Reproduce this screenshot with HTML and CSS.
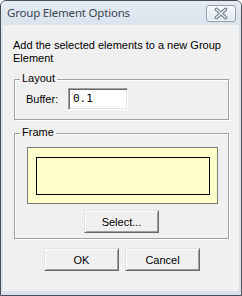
FILE: index.html
```html
<!DOCTYPE html>
<html>
<head>
<meta charset="utf-8">
<link rel="stylesheet" href="styles.css">
</head>
<body>
<div class="window">
  <div class="titlebar">
    <span class="title">Group Element Options</span>
    <div class="close">
      <svg width="28" height="15" viewBox="0 0 28 15">
        <path d="M9.5 3.5 L18.5 11.5 M18.5 3.5 L9.5 11.5" stroke="#6d7787" stroke-width="3.6" stroke-linecap="round" fill="none"/>
        <path d="M9.5 3.5 L18.5 11.5 M18.5 3.5 L9.5 11.5" stroke="#eef2f6" stroke-width="1.5" stroke-linecap="round" fill="none"/>
      </svg>
    </div>
  </div>
  <div class="client">
    <p class="desc">Add the selected elements to a new Group Element</p>
    <div class="group layout">
      <span class="group-label">Layout</span>
      <div class="row">
        <span class="field-label">Buffer:</span>
        <div class="input">0.1</div>
      </div>
    </div>
    <div class="group frame">
      <span class="group-label">Frame</span>
      <div class="preview"><div class="preview-inner"></div></div>
      <div class="btn select">Select...</div>
    </div>
    <div class="actions">
      <div class="btn">OK</div>
      <div class="btn">Cancel</div>
    </div>
  </div>
</div>
</body>
</html>
```

FILE: styles.css
```css
html, body {
  margin: 0;
  padding: 0;
  background: #ffffff;
}

.window {
  width: 242px;
  height: 296px;
  box-sizing: border-box;
  border: 1px solid #4a4f57;
  border-radius: 6px 6px 0 0;
  background: #d9e2ec;
  display: flex;
  flex-direction: column;
  font-family: "Liberation Sans", Arial, sans-serif;
  font-size: 11px;
  color: #000;
}

.titlebar {
  height: 24px;
  flex: none;
  display: flex;
  justify-content: space-between;
  align-items: flex-start;
  padding-left: 6px;
  background: linear-gradient(#e4ebf3, #dae3ed);
  border-radius: 5px 5px 0 0;
}

.title {
  font-family: "Noto Sans", "Open Sans", sans-serif;
  font-size: 11.5px;
  letter-spacing: -0.2px;
  line-height: 24px;
  color: #3c4552;
}

.close {
  margin-top: 4px;
  margin-right: 5px;
  width: 28px;
  height: 15px;
  border: 1px solid #8f9cae;
  border-radius: 3px;
  background: linear-gradient(#f6f8fb, #dfe6ee);
  box-shadow: inset 0 0 0 1px rgba(255,255,255,0.6);
  display: flex;
}

.client {
  flex: none;
  height: 266px;
  margin: 0 2px;
  background: #f0f0f0;
  box-sizing: border-box;
  padding-top: 14px;
}

.desc {
  margin: 0 10px;
  line-height: 13px;
}

.group {
  position: relative;
  margin: 14px 10px 0 11px;
  border: 1px solid #a0a0a0;
  box-shadow: inset 1px 1px 0 #ffffff, 1px 1px 0 #ffffff;
}

.group-label {
  position: absolute;
  top: -8px;
  left: 5px;
  padding: 0 2px;
  line-height: 13px;
  background: #f0f0f0;
}

.layout {
  padding: 8px 0 9px 11px;
}

.row {
  display: flex;
  align-items: center;
}

.field-label {
  width: 42px;
}

.input {
  width: 60px;
  height: 22px;
  box-sizing: border-box;
  border-style: solid;
  border-width: 1px;
  border-color: #a0a0a0 #ffffff #ffffff #a0a0a0;
  box-shadow: inset 1px 1px 0 #696969, inset -1px -1px 0 #e3e3e3;
  background: #ffffff;
  font-family: "DejaVu Sans Mono", "Liberation Mono", monospace;
  font-size: 11px;
  line-height: 20px;
  padding-left: 4px;
}

.frame {
  margin-top: 13px;
  padding: 13px 0 5px 0;
  display: flex;
  flex-direction: column;
  align-items: center;
}

.preview {
  align-self: flex-start;
  margin-left: 12px;
  width: 191px;
  height: 57px;
  box-sizing: border-box;
  border: 1px solid #7a7a7a;
  background: #ffffcc;
  padding: 9px 7px 0 8px;
}

.preview-inner {
  height: 38px;
  box-sizing: border-box;
  border: 1px solid #000;
}

.btn {
  width: 75px;
  height: 23px;
  box-sizing: border-box;
  border-style: solid;
  border-width: 1px;
  border-color: #e3e3e3 #696969 #696969 #e3e3e3;
  box-shadow: inset 1px 1px 0 #ffffff, inset -1px -1px 0 #a0a0a0;
  background: #f0f0f0;
  display: flex;
  align-items: center;
  justify-content: center;
}

.select {
  margin-top: 6px;
}

.actions {
  display: flex;
  justify-content: center;
  gap: 6px;
  margin-top: 9px;
  padding-left: 2px;
}
```
